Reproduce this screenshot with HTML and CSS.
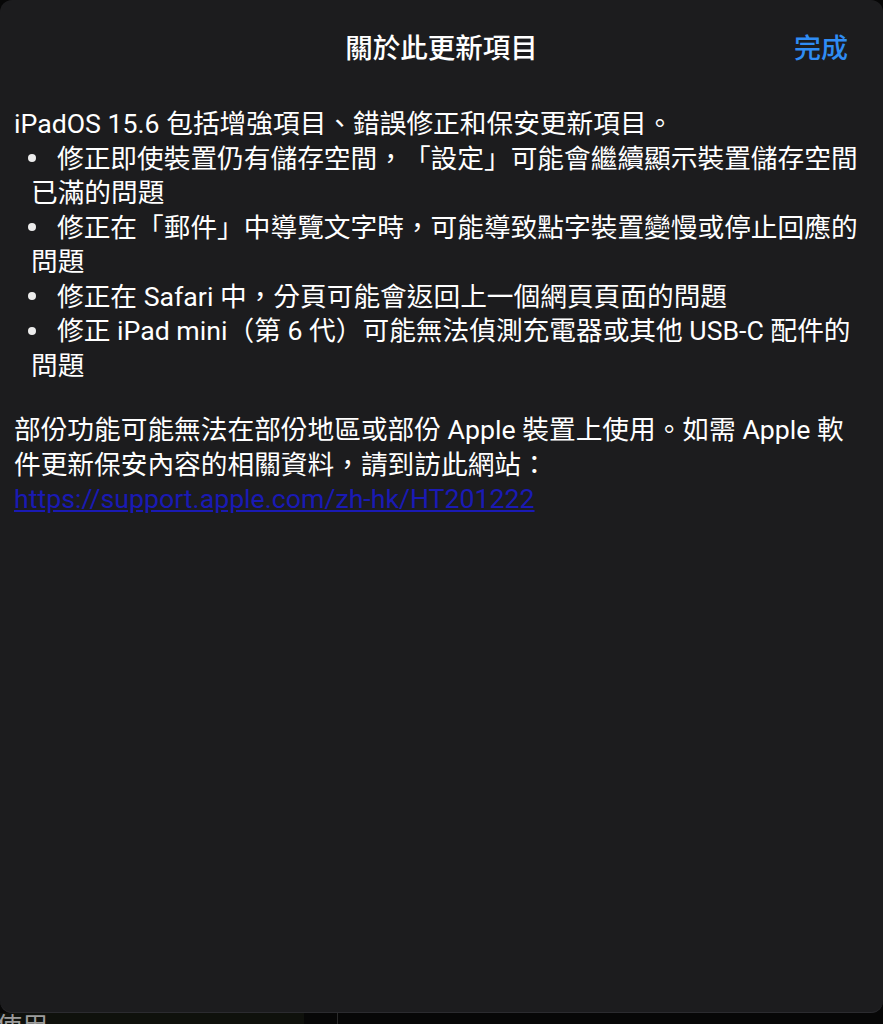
FILE: index.html
```html
<!DOCTYPE html>
<html lang="zh-Hant">
<head>
    <meta charset="UTF-8">
    <meta name="viewport" content="width=device-width, initial-scale=1.0">
    <title>關於此更新項目</title>
    <link rel="stylesheet" href="styles.css">
</head>
<body>

    <div class="sheet">
        <header class="nav-bar">
            <span class="nav-spacer"></span>
            <h1 class="nav-title">關於此更新項目</h1>
            <a class="nav-done" href="#">完成</a>
        </header>

        <article class="notes">
            <p class="notes-intro">iPadOS 15.6 包括增強項目、錯誤修正和保安更新項目。</p>
            <ul class="notes-list">
                <li>修正即使裝置仍有儲存空間，「設定」可能會繼續顯示裝置儲存空間已滿的問題</li>
                <li>修正在「郵件」中導覽文字時，可能導致點字裝置變慢或停止回應的問題</li>
                <li>修正在 Safari 中，分頁可能會返回上一個網頁頁面的問題</li>
                <li>修正 iPad mini（第 6 代）可能無法偵測充電器或其他 USB-C 配件的問題</li>
            </ul>
            <p class="notes-footer">部份功能可能無法在部份地區或部份 Apple 裝置上使用。如需 Apple 軟件更新保安內容的相關資料，請到訪此網站：<br><a class="notes-link" href="#">https://support.apple.com/zh-hk/HT201222</a></p>
        </article>
    </div>

    <div class="behind">
        <div class="behind-panel"><span class="behind-text">使用</span></div>
        <span class="behind-divider"></span>
    </div>

</body>
</html>
```

FILE: styles.css
```css
/* 基础 */
* {
    box-sizing: border-box;
}
body {
    margin: 0;
    height: 1024px;
    display: flex;
    flex-direction: column;
    background-color: #070707;
    color: #ffffff;
    font-family: Roboto, "Noto Sans CJK TC", sans-serif;
    text-spacing-trim: space-all; /* 全角标点不压缩 */
    overflow: hidden;
}

/* 弹出面板 */
.sheet {
    flex: 0 0 1013px;
    background-color: #1c1c1e;
    border-radius: 12px;
    border-bottom: 1px solid #2b2b2f;
}

/* 顶部导航 */
.nav-bar {
    height: 92px;
    display: grid;
    grid-template-columns: 1fr auto 1fr;
    align-items: center;
    padding: 0 35px;
}
.nav-title {
    margin: 0;
    font-size: 27.5px;
    font-weight: 500;
}
.nav-done {
    justify-self: end;
    color: #2f8cf4;
    text-decoration: none;
    font-size: 27px;
    font-weight: 500;
}

/* 正文 */
.notes {
    padding: 15px 15px 0 14px;
    font-size: 26.7px;
    line-height: 34.5px;
}
.notes-intro {
    margin: 0;
}
.notes-list {
    list-style: none;
    margin: 0;
    padding: 0 0 0 17px;
}
.notes-list li::before {
    content: "";
    display: inline-block;
    width: 8px;
    height: 8px;
    border-radius: 50%;
    background-color: #ececec;
    margin: 0 21px 0 -3px;
    vertical-align: middle;
    position: relative;
    top: -2px;
}
.notes-footer {
    margin: 30px 0 0 0;
}
.notes-link {
    color: #1a1ab4;
}

/* 面板后面的页面 */
.behind {
    flex: 1;
    display: flex;
    overflow: hidden;
}
.behind-panel {
    width: 304px;
    background-color: #0f110c;
    overflow: hidden;
}
.behind-text {
    display: block;
    margin: 1px 0 0 -4px;
    font-size: 26px;
    line-height: 26px;
    color: #9c9c9c;
}
.behind-divider {
    width: 1px;
    margin-left: 33px;
    background-color: #2a2a2a;
}
```
